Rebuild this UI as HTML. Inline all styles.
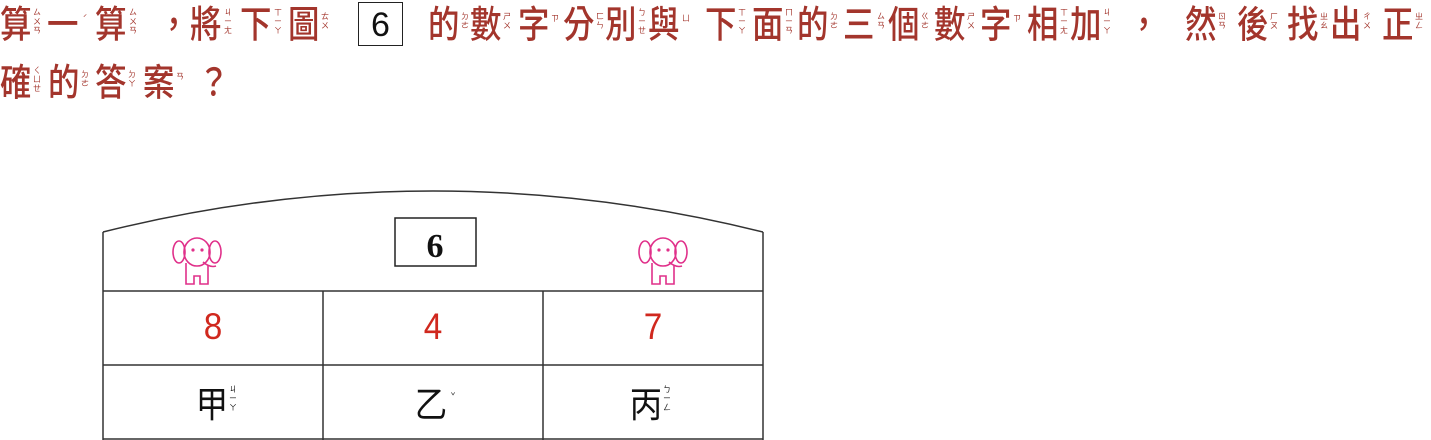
<!DOCTYPE html>
<html><head><meta charset="utf-8"><style>
body{margin:0;width:1431px;height:440px;background:#fff;position:relative;overflow:hidden;font-family:"Liberation Sans","Noto Sans CJK TC",sans-serif}
.c{position:absolute;font-size:37px;line-height:42px;color:#a3352c;font-family:"Noto Sans CJK TC",sans-serif;font-weight:500;transform:scale(0.85,1.02);transform-origin:left top}
.z{position:absolute;font-size:8px;line-height:9px;color:#a3352c;width:10px;text-align:center;font-family:"Noto Sans CJK TC",sans-serif}
.box6{position:absolute;left:358px;top:2px;width:45px;height:44px;border:1.5px solid #222;font-size:34px;line-height:44px;text-align:center;color:#111;box-sizing:border-box}
.num{position:absolute;font-size:37px;color:#d0281e;width:220px;text-align:center;top:306px;transform:scaleX(0.9)}
.bot{position:absolute;font-size:36px;color:#111;top:376px;font-family:"Noto Sans CJK TC",sans-serif;transform:scaleX(0.9)}
</style></head><body>
<div class="c" style="left:0;top:0">算</div><div class="c" style="left:47px;top:0">一</div><div class="c" style="left:95px;top:0">算</div><div class="c" style="left:158px;top:0">，</div><div class="c" style="left:190px;top:0">將</div><div class="c" style="left:240px;top:0">下</div><div class="c" style="left:288px;top:0">圖</div>
<div class="box6">6</div>
<div class="c" style="left:428px;top:0">的</div><div class="c" style="left:470px;top:0">數</div><div class="c" style="left:518px;top:0">字</div><div class="c" style="left:563px;top:0">分</div><div class="c" style="left:605px;top:0">別</div><div class="c" style="left:648px;top:0">與</div><div class="c" style="left:705px;top:0">下</div><div class="c" style="left:752px;top:0">面</div><div class="c" style="left:797px;top:0">的</div><div class="c" style="left:843px;top:0">三</div><div class="c" style="left:888px;top:0">個</div><div class="c" style="left:934px;top:0">數</div><div class="c" style="left:980px;top:0">字</div><div class="c" style="left:1027px;top:0">相</div><div class="c" style="left:1070px;top:0">加</div><div class="c" style="left:1128px;top:0">，</div><div class="c" style="left:1185px;top:0">然</div><div class="c" style="left:1237px;top:0">後</div><div class="c" style="left:1287px;top:0">找</div><div class="c" style="left:1330px;top:0">出</div><div class="c" style="left:1382px;top:0">正</div>
<div class="c" style="left:0;top:58px">確</div><div class="c" style="left:48px;top:58px">的</div><div class="c" style="left:95px;top:58px">答</div><div class="c" style="left:143px;top:58px">案</div><div class="c" style="left:198px;top:58px">？</div>
<div class="z" style="left:32px;top:8px">ㄙ<br>ㄨ<br>ㄢ</div><div class="z" style="left:80px;top:14px">ˊ</div><div class="z" style="left:128px;top:8px">ㄙ<br>ㄨ<br>ㄢ</div><div class="z" style="left:223px;top:8px">ㄐ<br>ㄧ<br>ㄤ</div><div class="z" style="left:273px;top:8px">ㄒ<br>ㄧ<br>ㄚ</div><div class="z" style="left:320px;top:12px">ㄊ<br>ㄨ</div>
<div class="z" style="left:460px;top:12px">ㄉ<br>ㄜ</div><div class="z" style="left:502px;top:12px">ㄕ<br>ㄨ</div><div class="z" style="left:550px;top:14px">ㄗ</div><div class="z" style="left:595px;top:12px">ㄈ<br>ㄣ</div><div class="z" style="left:637px;top:8px">ㄅ<br>ㄧ<br>ㄝ</div><div class="z" style="left:681px;top:14px">ㄩ</div><div class="z" style="left:737px;top:8px">ㄒ<br>ㄧ<br>ㄚ</div><div class="z" style="left:784px;top:8px">ㄇ<br>ㄧ<br>ㄢ</div><div class="z" style="left:829px;top:12px">ㄉ<br>ㄜ</div><div class="z" style="left:876px;top:12px">ㄙ<br>ㄢ</div><div class="z" style="left:920px;top:12px">ㄍ<br>ㄜ</div><div class="z" style="left:966px;top:12px">ㄕ<br>ㄨ</div><div class="z" style="left:1012px;top:14px">ㄗ</div><div class="z" style="left:1059px;top:8px">ㄒ<br>ㄧ<br>ㄤ</div><div class="z" style="left:1102px;top:8px">ㄐ<br>ㄧ<br>ㄚ</div><div class="z" style="left:1217px;top:12px">ㄖ<br>ㄢ</div><div class="z" style="left:1269px;top:12px">ㄏ<br>ㄡ</div><div class="z" style="left:1319px;top:12px">ㄓ<br>ㄠ</div><div class="z" style="left:1362px;top:12px">ㄔ<br>ㄨ</div><div class="z" style="left:1414px;top:12px">ㄓ<br>ㄥ</div>
<div class="z" style="left:32px;top:66px">ㄑ<br>ㄩ<br>ㄝ</div><div class="z" style="left:80px;top:70px">ㄉ<br>ㄜ</div><div class="z" style="left:127px;top:70px">ㄉ<br>ㄚ</div><div class="z" style="left:175px;top:72px">ㄢ</div>
<svg style="position:absolute;left:0;top:0" width="1431" height="440">
<path d="M103 232 Q433 150 763 232" fill="none" stroke="#333" stroke-width="1.5"/>
<rect x="395" y="218" width="81" height="48" fill="none" stroke="#222" stroke-width="1.5"/>
<text x="435" y="257" text-anchor="middle" font-family="Liberation Serif" font-weight="bold" font-size="34" fill="#111">6</text>
<g fill="none" stroke="#e0308a" stroke-width="1.6">
<g id="el"><ellipse cx="197" cy="252" rx="13" ry="14"/><ellipse cx="179" cy="252" rx="6" ry="11"/><ellipse cx="215" cy="252" rx="6" ry="11"/><path d="M186 263 L186 284 L194 284 L194 276 L200 276 L200 284 L208 284 L208 265"/><path d="M203 262 Q210 268 216 266"/><circle cx="193" cy="250" r="0.8"/><circle cx="202" cy="250" r="0.8"/></g>
<use href="#el" x="466"/>
</g>
<g stroke="#333" stroke-width="1.5">
<line x1="103" y1="232" x2="103" y2="440"/><line x1="763" y1="232" x2="763" y2="440"/>
<line x1="103" y1="291" x2="763" y2="291"/><line x1="103" y1="365" x2="763" y2="365"/><line x1="103" y1="439" x2="763" y2="439"/>
<line x1="323" y1="291" x2="323" y2="440"/><line x1="543" y1="291" x2="543" y2="440"/>
</g>
</svg>
<div class="num" style="left:103px">8</div><div class="num" style="left:323px">4</div><div class="num" style="left:543px">7</div>
<div class="bot" style="left:194px">甲</div><div class="bot" style="left:413px">乙</div><div class="bot" style="left:628px">丙</div>
<div class="z" style="left:228px;top:385px;color:#111">ㄐ<br>ㄧ<br>ㄚ</div><div class="z" style="left:448px;top:392px;color:#111">ˇ</div><div class="z" style="left:662px;top:385px;color:#111">ㄅ<br>ㄧ<br>ㄥ</div>
</body></html>
